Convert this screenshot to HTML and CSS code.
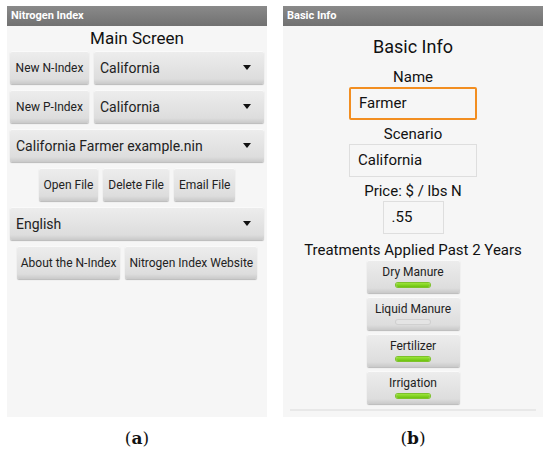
FILE: index.html
```html
<!DOCTYPE html>
<html lang="en">
<head>
    <meta charset="UTF-8">
    <meta name="viewport" content="width=device-width, initial-scale=1.0">
    <title>Nitrogen Index Screens</title>
    <link rel="stylesheet" href="styles.css">
</head>
<body>

    <div class="figure">
        <!-- (a) main screen -->
        <div class="panel">
            <div class="screen">
                <div class="titlebar">Nitrogen Index</div>
                <div class="main">
                    <h2 class="heading">Main Screen</h2>

                    <div class="row">
                        <div class="btn btn-new">New N-Index</div>
                        <div class="spinner">California<span class="arrow"></span></div>
                    </div>
                    <div class="row">
                        <div class="btn btn-new">New P-Index</div>
                        <div class="spinner">California<span class="arrow"></span></div>
                    </div>
                    <div class="row">
                        <div class="spinner">California Farmer example.nin<span class="arrow"></span></div>
                    </div>
                    <div class="row row-center">
                        <div class="btn">Open File</div>
                        <div class="btn">Delete File</div>
                        <div class="btn">Email File</div>
                    </div>
                    <div class="row">
                        <div class="spinner">English<span class="arrow"></span></div>
                    </div>
                    <div class="row row-center">
                        <div class="btn btn-wide">About the N-Index</div>
                        <div class="btn btn-wide">Nitrogen Index Website</div>
                    </div>
                </div>
            </div>
            <div class="caption">(<b>a</b>)</div>
        </div>

        <!-- (b) basic info -->
        <div class="panel">
            <div class="screen">
                <div class="titlebar">Basic Info</div>
                <div class="info">
                    <h2 class="info-heading">Basic Info</h2>

                    <div class="label">Name</div>
                    <div class="field field-focus field-name">Farmer</div>

                    <div class="label">Scenario</div>
                    <div class="field field-name">California</div>

                    <div class="label">Price: $ / lbs N</div>
                    <div class="field field-price">.55</div>

                    <div class="label label-treat">Treatments Applied Past 2 Years</div>
                    <div class="toggle">Dry Manure<span class="light on"></span></div>
                    <div class="toggle">Liquid Manure<span class="light"></span></div>
                    <div class="toggle">Fertilizer<span class="light on"></span></div>
                    <div class="toggle">Irrigation<span class="light on"></span></div>

                    <div class="divider"></div>
                </div>
            </div>
            <div class="caption">(<b>b</b>)</div>
        </div>
    </div>

</body>
</html>
```

FILE: styles.css
```css
body {
    margin: 0;
    background-color: #fff;
    font-family: Roboto, "Noto Sans", Arial, sans-serif;
    color: #222;
}

.figure {
    display: flex;
    gap: 16px;
    padding: 6px 7px 0;
}

.panel {
    width: 260px;
}

.screen {
    height: 411px;
    background-color: #f6f6f6;
}

.titlebar {
    height: 20px;
    line-height: 20px;
    padding-left: 4px;
    background: linear-gradient(#8a8a8a, #717171);
    color: #fff;
    font-size: 11px;
    font-weight: bold;
}

.caption {
    margin-top: 10px;
    text-align: center;
    font-family: "DejaVu Serif", "Liberation Serif", serif;
    font-size: 17px;
    line-height: 22px;
    color: #111;
}

/* main screen */

.main {
    padding: 0 3px;
}

.heading {
    margin: 0;
    font-size: 17px;
    font-weight: normal;
    line-height: 25px;
    text-align: center;
    color: #111;
}

.row {
    display: flex;
    gap: 5px;
    height: 33px;
    margin-bottom: 6px;
}

.row-center {
    justify-content: center;
}

.btn,
.spinner,
.toggle {
    box-sizing: border-box;
    background: linear-gradient(#ededed, #dddddd 85%, #c9c9c9);
    border-radius: 2px;
    box-shadow: 0 1px 1px rgba(0, 0, 0, 0.25), inset 0 1px 0 rgba(255, 255, 255, 0.7);
}

.btn {
    display: flex;
    align-items: center;
    justify-content: center;
    padding: 0 5px;
    font-size: 12px;
    white-space: nowrap;
}

.btn-new {
    width: 79px;
    padding: 0;
}

.btn-wide {
    padding: 0 4px;
}

.spinner {
    flex: 1;
    display: flex;
    align-items: center;
    padding: 0 13px 0 6px;
    font-size: 14px;
}

.arrow {
    margin-left: auto;
    width: 0;
    height: 0;
    border-left: 4px solid transparent;
    border-right: 4px solid transparent;
    border-top: 5px solid #111;
}

/* basic info */

.info {
    display: flex;
    flex-direction: column;
    align-items: center;
}

.info-heading {
    margin: 9px 0 8px;
    font-size: 18px;
    font-weight: normal;
    line-height: 24px;
    color: #111;
}

.label {
    font-size: 15px;
    line-height: 20px;
    color: #111;
}

.field {
    box-sizing: border-box;
    height: 33px;
    margin-bottom: 4px;
    padding-left: 8px;
    border: 1px solid #dedede;
    line-height: 31px;
    font-size: 15px;
    color: #111;
}

.field-name {
    width: 128px;
}

.field-focus {
    border: 2px solid #f28e21;
    border-radius: 2px;
    line-height: 29px;
}

.field-price {
    width: 61px;
    margin-bottom: 6px;
}

.toggle {
    display: flex;
    flex-direction: column;
    align-items: center;
    width: 93px;
    height: 33px;
    margin-bottom: 4px;
    padding-top: 5px;
    font-size: 12px;
    line-height: 14px;
}

.light {
    width: 34px;
    height: 4px;
    margin-top: 4px;
    border-radius: 2px;
    background: #e4e4e4;
    box-shadow: 0 0 0 1px #d0d0d0;
}

.light.on {
    background: linear-gradient(#9be43a, #6cc20e);
    box-shadow: 0 0 0 1px #7dc22a;
}

.divider {
    align-self: flex-start;
    width: 246px;
    height: 2px;
    margin: 1px 0 0 7px;
    background: #e8e8e8;
}
```
